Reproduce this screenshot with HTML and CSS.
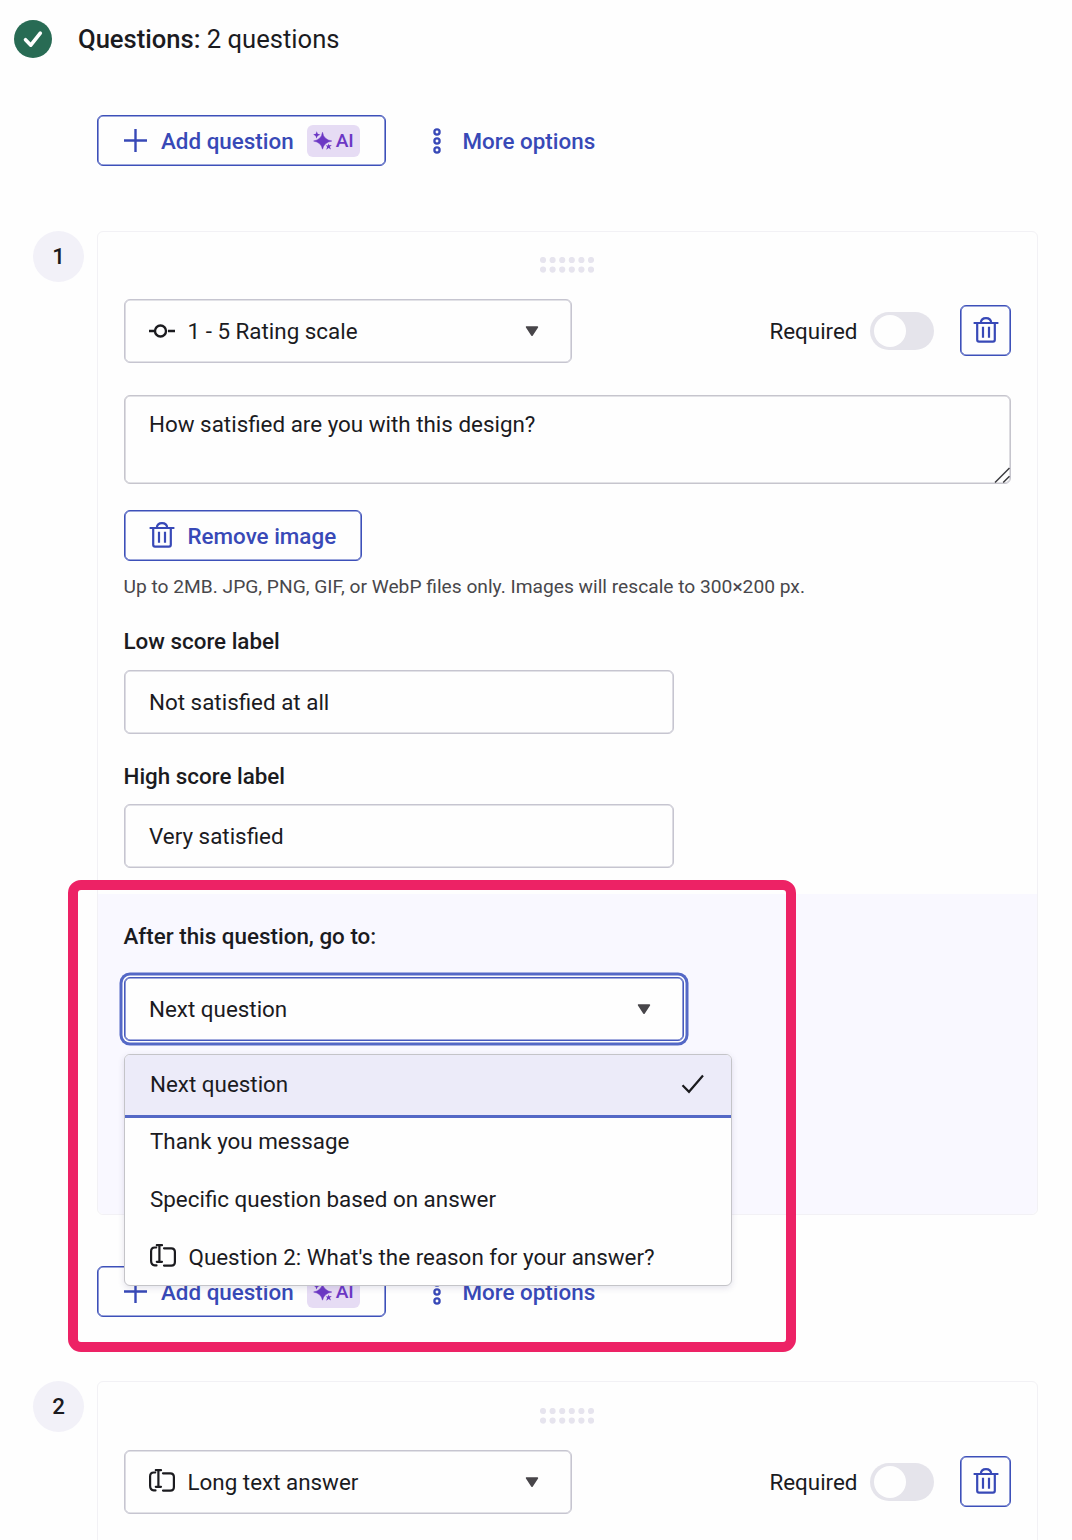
FILE: index.html
```html
<!DOCTYPE html>
<html lang="en">
<head>
    <meta charset="UTF-8">
    <meta name="viewport" content="width=device-width, initial-scale=1.0">
    <title>Questions</title>
    <link rel="stylesheet" href="styles.css">
</head>
<body>
    <!-- Shared icons -->
    <svg class="icon-defs" aria-hidden="true">
        <symbol id="icon-trash" viewBox="0 0 26 26">
            <path d="M.6 6h24.800M4.200 6v16.800q0 1.800 1.800 1.800h14q1.800 0 1.800-1.800V6M7.800 6C8 2.800 10 1.200 13 1.200S18 2.800 18.200 6M10 9.800v11M16 9.800v11" fill="none" stroke="currentColor" stroke-width="2.200"/>
        </symbol>
        <symbol id="icon-sparkles" viewBox="0 0 18 18">
            <path d="M9 1.200Q10 8.200 17.800 9.500Q10.400 10.800 9 17.200Q7.800 10.800 .6 9.500Q8 8.200 9 1.200Z" stroke="currentColor" stroke-width=".5"/>
            <path d="M3.600.2L4.400 2.700L7 3.500L4.600 4.500L3.100 7L2.500 4.700L.2 3.300L2.700 2.700Z"/>
            <path d="M14.700 11.800L15.500 13.500L17.800 13.300L16 14.900L17 17.600L14.800 16.200L12.500 17.800L13.400 15.200L12.300 13.400L14.200 13.700Z"/>
        </symbol>
        <symbol id="icon-text" viewBox="0 0 26 24">
            <path d="M6.200 3.500H4.800Q1.100 3.500 1.100 7.200V16.800Q1.100 21 4.800 21.400H6.500M6.800 1.200H12M9.400 1.200V17.800M6.800 17.800H12M14 4.300H21.300Q24.900 4.300 24.900 7.900V18Q24.900 21.600 21.300 21.600H14" fill="none" stroke="currentColor" stroke-width="2.200" stroke-linecap="round"/>
        </symbol>
        <symbol id="icon-caret" viewBox="0 0 14 11">
            <path d="M1.600 1H12.400L7 9.200Z" fill="currentColor" stroke="currentColor" stroke-width="1.600" stroke-linejoin="round"/>
        </symbol>
        <symbol id="icon-dots" viewBox="0 0 8 26">
            <g fill="none" stroke="currentColor" stroke-width="2.300">
                <circle cx="4" cy="4" r="2.600"/><circle cx="4" cy="13" r="2.600"/><circle cx="4" cy="22" r="2.600"/>
            </g>
        </symbol>
        <symbol id="icon-drag" viewBox="0 0 54 16">
            <path d="M3 3h.01M12.600 3h.01M22.200 3h.01M31.800 3h.01M41.400 3h.01M51 3h.01M3 12.600h.01M12.600 12.600h.01M22.200 12.600h.01M31.800 12.600h.01M41.400 12.600h.01M51 12.600h.01" stroke="currentColor" stroke-width="6.200" stroke-linecap="round"/>
        </symbol>
    </svg>

    <main class="page">
        <header class="section-header">
            <svg class="status" viewBox="0 0 38 38">
                <circle cx="19" cy="19" r="19" fill="#286b54"/>
                <path d="M11.500 19.700L16.800 25.200L26.300 13.200" fill="none" stroke="#fff" stroke-width="3.600" stroke-linecap="round" stroke-linejoin="round"/>
            </svg>
            <h1><strong>Questions:</strong> 2 questions</h1>
        </header>

        <div class="toolbar">
            <button class="btn add-btn" type="button">
                <svg class="plus" viewBox="0 0 23 23"><path d="M11.500 0V23M0 11.500H23" stroke="currentColor" stroke-width="2.400"/></svg>
                <span>Add question</span>
                <span class="ai-badge"><svg><use href="#icon-sparkles"/></svg>AI</span>
            </button>
            <button class="more-btn" type="button">
                <svg><use href="#icon-dots"/></svg>
                <span>More options</span>
            </button>
        </div>

        <section class="question">
            <div class="number">1</div>
            <div class="card">
                <div class="card-body">
                    <div class="drag"><svg><use href="#icon-drag"/></svg></div>
                    <div class="question-top">
                        <div class="select type-select">
                            <svg class="type-icon" viewBox="0 0 26 24"><path d="M0 12H7M19 12H26" stroke="currentColor" stroke-width="2.400"/><circle cx="11.500" cy="12" r="5.500" fill="none" stroke="currentColor" stroke-width="2.400"/></svg>
                            <span class="select-text">1 - 5 Rating scale</span>
                            <svg class="caret"><use href="#icon-caret"/></svg>
                        </div>
                        <div class="actions">
                            <span>Required</span>
                            <span class="toggle"></span>
                            <button class="btn delete-btn" type="button"><svg class="trash"><use href="#icon-trash"/></svg></button>
                        </div>
                    </div>
                    <div class="textarea">
                        How satisfied are you with this design?
                        <svg class="resize" viewBox="0 0 16 16"><path d="M1 15.500L15.500 1M9.200 15.500L15.500 9.200" stroke="#3c3c40" stroke-width="1.500"/></svg>
                    </div>
                    <button class="btn remove-btn" type="button">
                        <svg class="trash"><use href="#icon-trash"/></svg>
                        <span>Remove image</span>
                    </button>
                    <p class="hint">Up to 2MB. JPG, PNG, GIF, or WebP files only. Images will rescale to 300×200 px.</p>
                    <div class="form-group">
                        <div class="label">Low score label</div>
                        <div class="input">Not satisfied at all</div>
                    </div>
                    <div class="form-group">
                        <div class="label">High score label</div>
                        <div class="input">Very satisfied</div>
                    </div>
                </div>

                <div class="logic">
                    <div class="label">After this question, go to:</div>
                    <div class="logic-field">
                        <div class="select focused">
                            <span class="select-text">Next question</span>
                            <svg class="caret"><use href="#icon-caret"/></svg>
                        </div>
                        <ul class="dropdown">
                            <li class="selected">
                                <span>Next question</span>
                                <svg class="check" viewBox="0 0 24 20"><path d="M1.500 11.200L8 17.800L22 1.500" fill="none" stroke="currentColor" stroke-width="2.200"/></svg>
                            </li>
                            <li>Thank you message</li>
                            <li>Specific question based on answer</li>
                            <li><svg class="type-icon text-icon"><use href="#icon-text"/></svg><span>Question 2: What's the reason for your answer?</span></li>
                        </ul>
                    </div>
                </div>
            </div>
        </section>

        <div class="toolbar">
            <button class="btn add-btn" type="button">
                <svg class="plus" viewBox="0 0 23 23"><path d="M11.500 0V23M0 11.500H23" stroke="currentColor" stroke-width="2.400"/></svg>
                <span>Add question</span>
                <span class="ai-badge"><svg><use href="#icon-sparkles"/></svg>AI</span>
            </button>
            <button class="more-btn" type="button">
                <svg><use href="#icon-dots"/></svg>
                <span>More options</span>
            </button>
        </div>

        <section class="question question-last">
            <div class="number">2</div>
            <div class="card">
                <div class="card-body">
                    <div class="drag"><svg><use href="#icon-drag"/></svg></div>
                    <div class="question-top">
                        <div class="select type-select">
                            <svg class="type-icon text-icon"><use href="#icon-text"/></svg>
                            <span class="select-text">Long text answer</span>
                            <svg class="caret"><use href="#icon-caret"/></svg>
                        </div>
                        <div class="actions">
                            <span>Required</span>
                            <span class="toggle"></span>
                            <button class="btn delete-btn" type="button"><svg class="trash"><use href="#icon-trash"/></svg></button>
                        </div>
                    </div>
                </div>
            </div>
        </section>

        <div class="highlight"></div>
    </main>
</body>
</html>
```
FILE: styles.css
```css
* {
    box-sizing: border-box;
}

body {
    margin: 0;
    background-color: #fefefe;
    color: #1b1b1f;
    font-family: Roboto, "Liberation Sans", sans-serif;
    font-size: 22.4px;
    line-height: 28px;
}

svg {
    display: block;
    flex: none;
}

.icon-defs {
    width: 0;
    height: 0;
    position: absolute;
}

.page {
    position: relative;
    height: 1540px;
    overflow: hidden;
    padding: 20px 34px 0 14px;
}

/* Section header */
.section-header {
    display: flex;
    align-items: center;
    gap: 26px;
    height: 38px;
    margin-bottom: 57px;
}

.status {
    width: 38px;
    height: 38px;
}

h1 {
    margin: 0;
    font-size: 25.6px;
    font-weight: 400;
}

h1 strong {
    font-weight: 500;
}

/* Buttons */
button {
    padding: 0;
    border: none;
    background: none;
    color: #3849b7;
    font: inherit;
    font-weight: 500;
    display: flex;
    align-items: center;
}

.btn {
    height: 51px;
    border: 1px solid #3d50b9;
    border-radius: 6px;
    box-shadow: inset 0 0 0 0.6px #3d50b9;
}

.toolbar {
    display: flex;
    align-items: center;
    gap: 47px;
    height: 51px;
    margin-left: 83px;
}

.add-btn {
    width: 289px;
    padding-left: 26px;
}

.plus {
    width: 23px;
    height: 23px;
    margin-right: 14px;
}

.ai-badge {
    display: flex;
    align-items: center;
    gap: 4px;
    width: 53px;
    height: 32px;
    margin-left: 13px;
    padding-left: 6px;
    border-radius: 6px;
    background-color: #e6dcf4;
    color: #6c38c4;
    font-size: 19.2px;
}

.ai-badge svg {
    width: 19px;
    height: 19px;
    fill: currentColor;
}

.more-btn {
    gap: 21.5px;
}

.more-btn svg {
    width: 8px;
    height: 26px;
}

/* Question card */
.question {
    display: flex;
    align-items: flex-start;
    gap: 13px;
    margin: 65px 0 51px 19px;
}

.number {
    display: flex;
    align-items: center;
    justify-content: center;
    width: 51px;
    height: 51px;
    padding-bottom: 1px;
    border-radius: 50%;
    background-color: #f2f1f8;
    font-weight: 500;
}

.card {
    flex: 1;
    border: 1px solid #f2f1f5;
    border-radius: 6px;
}

.card-body {
    padding: 0 26px 26px;
}

.drag {
    display: flex;
    justify-content: center;
    height: 67px;
    padding: 25px 1px 0 0;
    color: #e6e4ee;
}

.drag svg {
    width: 54px;
    height: 16px;
}

.question-last {
    margin-top: 64px;
}

.question-last .card {
    height: 300px;
}

.question-last .drag {
    height: 68px;
    padding-top: 26px;
}

.question-top {
    display: flex;
    justify-content: space-between;
    align-items: center;
}

.select,
.input {
    display: flex;
    align-items: center;
    height: 64px;
    padding: 0 24px;
    border: 1px solid #c6c5d0;
    border-radius: 6px;
    background-color: #fefefe;
    box-shadow: inset 0 0 0 0.6px #c6c5d0;
}

.type-select {
    width: 448px;
    padding-right: 32px;
}

.select-text {
    flex: 1;
}

.type-icon {
    width: 26px;
    height: 24px;
    margin-right: 12.5px;
}

.text-icon {
    margin-top: -2px;
}

.caret {
    width: 14px;
    height: 11px;
    color: #48464a;
}

.actions {
    display: flex;
    align-items: center;
}

.toggle {
    width: 64px;
    height: 38px;
    margin: 0 26px 0 12.5px;
    padding: 3px 4px;
    border-radius: 19px;
    background-color: #e5e4eb;
}

.toggle::before {
    content: "";
    display: block;
    width: 32px;
    height: 32px;
    border-radius: 50%;
    background-color: #fefefe;
}

.delete-btn {
    width: 51px;
    margin-bottom: 2px;
    justify-content: center;
}

.trash {
    width: 26px;
    height: 26px;
}

.textarea {
    position: relative;
    height: 89px;
    margin-top: 32px;
    padding: 14px 24px;
    border: 1px solid #c6c5cd;
    border-radius: 6px;
    box-shadow: inset 0 0 0 0.6px #c6c5cd;
}

.resize {
    position: absolute;
    right: 0;
    bottom: 0;
    width: 16px;
    height: 16px;
}

.remove-btn {
    width: 238px;
    margin-top: 26px;
    padding-left: 24px;
    gap: 12.5px;
}

.remove-btn .trash {
    margin-top: -1px;
}

.hint {
    margin: 12px 0 26px -0.5px;
    color: #48474b;
    font-size: 19.2px;
}

.label {
    margin-left: -0.5px;
    font-weight: 500;
}

.input {
    width: 550px;
    margin-top: 15px;
}

.form-group + .form-group {
    margin-top: 28px;
}

.form-group + .form-group .input {
    margin-top: 14px;
}

/* Where to go after the question */
.logic {
    height: 320px;
    padding: 28px 26px;
    border-radius: 0 0 6px 6px;
    background-color: #f9f8ff;
}

.logic-field {
    position: relative;
    margin-top: 27px;
}

.focused {
    width: 560px;
    padding-right: 32px;
    border-color: #4659bd;
    box-shadow: inset 0 0 0 0.6px #4659bd, 0 0 0 1.5px #fefefe, 0 0 0 4.5px #5468c6;
}

.dropdown {
    position: absolute;
    top: 77px;
    left: 0;
    z-index: 1;
    width: 608px;
    height: 232px;
    margin: 0;
    padding: 0;
    overflow: hidden;
    list-style: none;
    border: 1px solid #c4c4c8;
    border-radius: 6px;
    background-color: #fefefe;
    box-shadow: 0 2px 6px rgba(70, 60, 120, 0.15);
}

.dropdown li {
    display: flex;
    align-items: center;
    height: 58px;
    padding: 0 26px 0 25px;
}

.dropdown .selected {
    justify-content: space-between;
    height: 63px;
    margin-bottom: -6px;
    padding-bottom: 2px;
    border-bottom: 3px solid #5468c6;
    background-color: #ecebf9;
}

.check {
    width: 24px;
    height: 20px;
}

/* Marker frame over the page */
.highlight {
    position: absolute;
    top: 880px;
    left: 68px;
    z-index: 2;
    width: 728px;
    height: 472px;
    border: 10px solid #ed2265;
    border-radius: 13px;
}
```
